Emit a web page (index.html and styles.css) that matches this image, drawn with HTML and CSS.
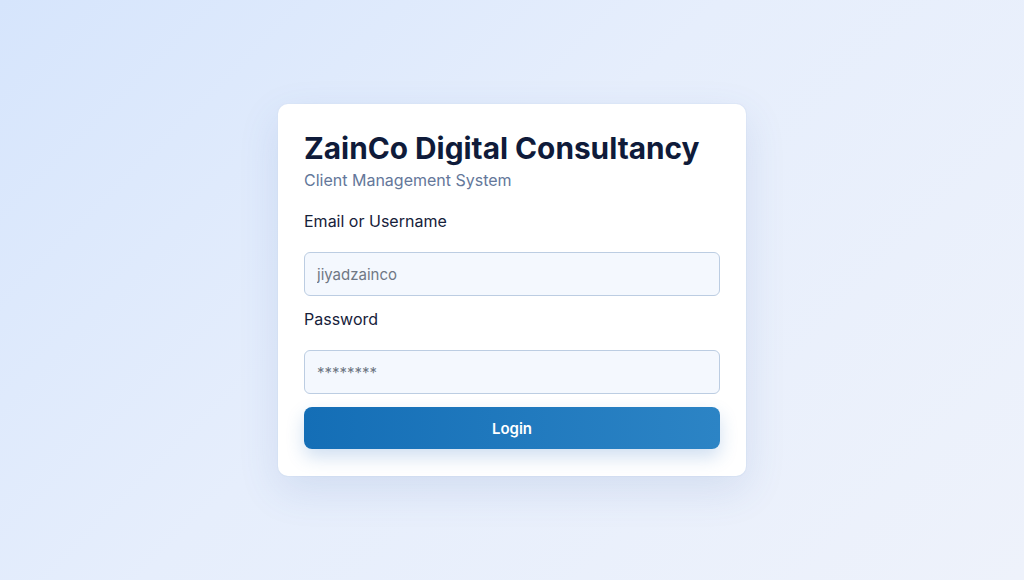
FILE: index.html
```html
<!DOCTYPE html>
<html lang="en">
<head>
<meta charset="utf-8">
<title>ZainCo Digital Consultancy - Login</title>
<link rel="stylesheet" href="styles.css">
</head>
<body>
<main class="page">
  <form class="card">
    <h1 class="title">ZainCo Digital Consultancy</h1>
    <p class="subtitle">Client Management System</p>
    <label class="label" for="user">Email or Username</label>
    <input class="field" id="user" type="text" placeholder="jiyadzainco">
    <label class="label" for="pass">Password</label>
    <input class="field" id="pass" type="text" placeholder="********">
    <button class="btn" type="button">Login</button>
  </form>
</main>
</body>
</html>
```
FILE: styles.css
```css
* { box-sizing: border-box; }
html, body { margin: 0; height: 100%; }
body {
  font-family: Inter, "Noto Sans", sans-serif;
  background: linear-gradient(135deg, #d6e5fc 0%, #e6eefc 45%, #eef2fb 100%);
  color: #0f1b33;
}
.page {
  height: 580px;
  display: flex;
  align-items: flex-start;
  justify-content: center;
  padding-top: 104px;
}
.card {
  width: 468px;
  background: #fff;
  border-radius: 10px;
  padding: 27px 26px 27px 26px;
  display: flex;
  flex-direction: column;
  box-shadow: 0 14px 40px rgba(60, 100, 170, 0.13), 0 0 0 1px rgba(220, 230, 245, 0.5);
}
.title {
  margin: 0;
  font-size: 29.8px;
  font-weight: 700;
  line-height: 34px;
  color: #0f1b3a;
  letter-spacing: 0;
}
.subtitle {
  margin: 4px 0 0;
  font-size: 16px;
  line-height: 22px;
  color: #64779a;
}
.label {
  font-size: 16px;
  line-height: 22px;
  font-weight: 400;
  color: #16213a;
}
.subtitle + .label { margin-top: 19px; }
.field {
  margin-top: 20px;
  height: 44px;
  border: 1px solid #bccde2;
  border-radius: 6px;
  background: #f4f8fe;
  padding: 0 12px;
  font-family: inherit;
  font-size: 15px;
  color: #333;
  outline: none;
}
.field::placeholder { color: #6f7784; }
.field + .label { margin-top: 12px; }
.btn {
  margin-top: 13px;
  height: 42px;
  border: none;
  border-radius: 8px;
  background: linear-gradient(90deg, #146eb6 0%, #2c84c5 100%);
  color: #fff;
  font-family: inherit;
  font-size: 15px;
  font-weight: 600;
  box-shadow: 0 8px 18px rgba(40, 110, 190, 0.22);
  cursor: pointer;
}
```
